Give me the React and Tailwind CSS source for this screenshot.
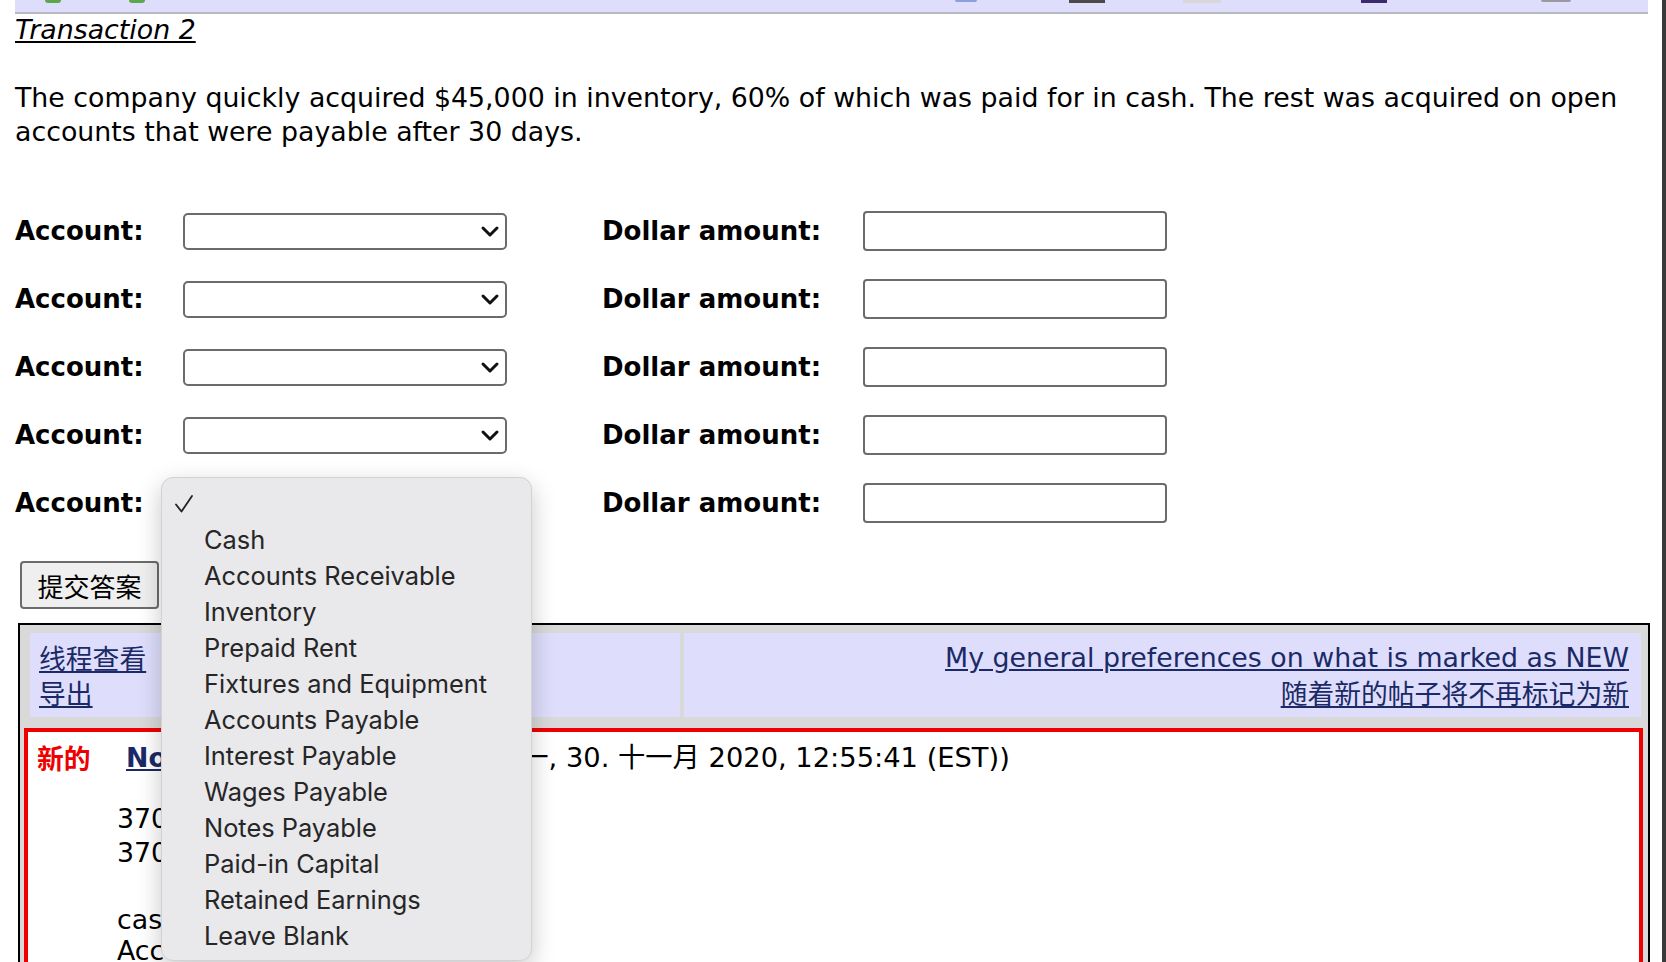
import React from 'react'

const opcoes = [
  'Cash',
  'Accounts Receivable',
  'Inventory',
  'Prepaid Rent',
  'Fixtures and Equipment',
  'Accounts Payable',
  'Interest Payable',
  'Wages Payable',
  'Notes Payable',
  'Paid-in Capital',
  'Retained Earnings',
  'Leave Blank',
]

function Chevron() {
  return (
    <svg className="w-[20px] h-[14px]" viewBox="0 0 20 14" fill="none">
      <path d="M3 4l7 7 7-7" stroke="#111" strokeWidth="3" strokeLinecap="round" strokeLinejoin="round" />
    </svg>
  )
}

function LinhaConta() {
  return (
    <div className="flex items-center h-[68px]">
      <span className="w-[168px] font-bold text-[26px]">Account:</span>
      <div className="w-[324px] h-[37px] border-2 border-[#6b6b6b] rounded-[5px] bg-white flex items-center justify-end pr-[5px]">
        <Chevron />
      </div>
      <span className="ml-[95px] w-[261px] font-bold text-[26px]">Dollar amount:</span>
      <div className="w-[304px] h-[40px] border-2 border-[#6b6b6b] rounded-[4px] bg-white" />
    </div>
  )
}

export default function App() {
  return (
    <div
      className="relative w-[1666px] h-[962px] overflow-hidden bg-white text-black text-[26.8px]"
      style={{ fontFamily: '"DejaVu Sans", Verdana, "Noto Sans CJK SC", sans-serif' }}
    >
      {/* faixa escura à direita */}
      <div className="absolute top-0 right-0 w-[4px] h-full bg-[#3a3a3a]" />

      {/* barra superior cortada */}
      <div className="relative ml-[15px] w-[1633px] h-[14px] bg-[#dedefc] border-b-2 border-[#b9b9c0]">
        <span className="absolute left-[30px] top-0 w-[16px] h-[3px] rounded-b-full bg-[#5aa84a]" />
        <span className="absolute left-[114px] top-0 w-[16px] h-[3px] rounded-b-full bg-[#5aa84a]" />
        <span className="absolute left-[940px] top-0 w-[22px] h-[2px] rounded-b-full bg-[#8aa0e0]" />
        <span className="absolute left-[1054px] top-0 w-[36px] h-[3px] bg-[#4a4a4a]" />
        <span className="absolute left-[1168px] top-0 w-[38px] h-[3px] bg-[#d8d8d8]" />
        <span className="absolute left-[1346px] top-0 w-[26px] h-[3px] bg-[#3b2a6e]" />
        <span className="absolute left-[1526px] top-0 w-[30px] h-[2px] rounded-b-full bg-[#9a9aa0]" />
      </div>

      <div className="pl-[15px]">
        <div className="h-[32px] leading-[32px] italic underline">Transaction 2</div>

        <p className="mt-[35px] leading-[34px] w-[1625px]">
          The company quickly acquired $45,000 in inventory, 60% of which was paid for in cash. The rest was acquired on open accounts that were payable after 30 days.
        </p>

        <div className="mt-[48px]">
          <LinhaConta />
          <LinhaConta />
          <LinhaConta />
          <LinhaConta />
          <LinhaConta />
        </div>

        <button
          className="mt-[24px] ml-[5px] w-[139px] h-[48px] border-2 border-[#6b6b6b] rounded-[4px] bg-[#efefef] text-[26px] flex items-center justify-center"
          style={{ fontFamily: '"Noto Sans CJK SC", sans-serif' }}
        >
          提交答案
        </button>
      </div>

      {/* tabela do fórum */}
      <div className="mt-[14px] ml-[18px] w-[1632px] h-[400px] border-2 border-black bg-[#d9d9d9] pt-[8px]">
        <div className="flex gap-[4px] ml-[10px] w-[1611px] h-[84px]">
          <div className="w-[650px] bg-[#dedefc] pl-[9px] pt-[7px] leading-[35px]" style={{ fontFamily: '"Noto Sans CJK SC", sans-serif' }}>
            <div className="underline text-[#1b2a66]">线程查看</div>
            <div className="underline text-[#1b2a66]">导出</div>
          </div>
          <div className="flex-1 bg-[#dedefc] pr-[12px] pt-[7px] leading-[35px] text-right">
            <div className="underline text-[#1b2a66]">My general preferences on what is marked as NEW</div>
            <div className="underline text-[#1b2a66]" style={{ fontFamily: '"Noto Sans CJK SC", sans-serif' }}>随着新的帖子将不再标记为新</div>
          </div>
        </div>
        <div className="mt-[11px] ml-[4px] w-[1619px] h-[300px] border-4 border-[#ee0000] bg-white pl-[9px] pt-[9px]">
          <div className="flex items-center h-[34px]">
            <span className="w-[89px] font-bold text-[#ee0000]" style={{ fontFamily: '"Noto Sans CJK SC", sans-serif' }}>新的</span>
            <span className="w-[330px] font-bold underline text-[#1b2a66]">Nov</span>
            <span className="text-[27.3px]">(星期一, 30. 十一月 2020, 12:55:41 (EST))</span>
          </div>
          <div className="pl-[80px] mt-[27px] leading-[34px]">
            <div>37000</div>
            <div>37000</div>
            <div className="mt-[34px] leading-[31px]">cash</div>
            <div className="leading-[31px]">Accounts</div>
          </div>
        </div>
      </div>

      {/* menu aberto do select */}
      <div
        className="absolute left-[161px] top-[477px] w-[371px] h-[484px] rounded-[12px] bg-[#e9e8eb] border border-[#d2d1d4] shadow-[0_8px_24px_rgba(0,0,0,0.22)] pt-[8px] text-[#262626] text-[25.4px]"
        style={{ fontFamily: 'Inter, "Noto Sans", sans-serif' }}
      >
        <div className="h-[36px] flex items-center pl-[12px]">
          <svg className="w-[20px] h-[20px]" viewBox="0 0 20 20" fill="none">
            <path d="M2 10.5l5.5 7L18 2" stroke="#222" strokeWidth="1.8" strokeLinecap="round" strokeLinejoin="round" />
          </svg>
        </div>
        {opcoes.map((o) => (
          <div key={o} className="h-[36px] leading-[36px] pl-[42px]">{o}</div>
        ))}
      </div>
    </div>
  )
}
